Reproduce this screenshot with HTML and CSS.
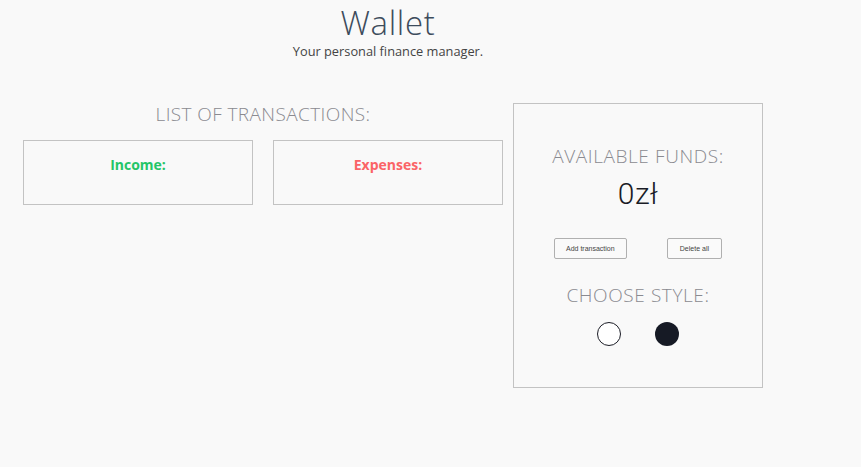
FILE: index.html
```html
<!DOCTYPE html>
<html lang="en">
<head>
<meta charset="utf-8">
<title>Wallet</title>
<link rel="stylesheet" href="styles.css">
</head>
<body>
<div class="page">
  <header class="header">
    <h1 class="title">Wallet</h1>
    <p class="subtitle">Your personal finance manager.</p>
  </header>
  <main class="main">
    <section class="transactions">
      <h2 class="section-title">LIST OF TRANSACTIONS:</h2>
      <div class="lists">
        <div class="list-box"><h3 class="list-title income">Income:</h3></div>
        <div class="list-box"><h3 class="list-title expenses">Expenses:</h3></div>
      </div>
    </section>
    <aside class="panel">
      <h2 class="panel-title">AVAILABLE FUNDS:</h2>
      <div class="funds">0zł</div>
      <div class="buttons">
        <button class="btn">Add transaction</button>
        <button class="btn">Delete all</button>
      </div>
      <h2 class="panel-title style-title">CHOOSE STYLE:</h2>
      <div class="styles">
        <span class="dot light"></span>
        <span class="dot dark"></span>
      </div>
    </aside>
  </main>
</div>
</body>
</html>
```
FILE: styles.css
```css
* { box-sizing: border-box; }
html, body { margin: 0; padding: 0; background: #f9f9f9; }
body { font-family: "Open Sans", "Lato", sans-serif; color: #333; }
.page { width: 776px; }
.header { text-align: center; padding-top: 0; }
.title {
  margin: 0;
  font-size: 33px; font-weight: 300; line-height: 45px;
  color: #3d4c5c; letter-spacing: 0.7px;
}
.subtitle { margin: -3px 0 0; font-size: 12.8px; line-height: 18px; color: #444; }
.main { display: flex; align-items: flex-start; padding-left: 23px; margin-top: 1px; }
.transactions { width: 480px; padding-top: 41px; }
.section-title {
  margin: 0; text-align: center; font-size: 19px; font-weight: 300;
  line-height: 24px; color: #8a8a90; letter-spacing: 0.4px;
}
.lists { display: flex; gap: 20px; margin-top: 14px; }
.list-box { width: 230px; height: 65px; border: 1px solid #c3c3c3; padding-top: 15px; }
.list-title { margin: 0; text-align: center; font-size: 14px; font-weight: 700; line-height: 18px; }
.income { color: #24c568; }
.expenses { color: #fb6467; }
.panel {
  width: 250px; height: 285px; margin-left: 10px; margin-top: 42px;
  border: 1px solid #c3c3c3; display: flex; flex-direction: column; align-items: center;
  padding-top: 40px;
}
.panel-title { margin: 0; font-size: 19px; font-weight: 300; line-height: 24px; color: #8a8a90; letter-spacing: 0.6px; }
.funds { margin-top: 8px; font-family: "Roboto", sans-serif; font-size: 30px; font-weight: 300; line-height: 36px; color: #1a1c26; letter-spacing: 0.5px; }
.buttons { display: flex; justify-content: space-between; width: 168px; margin-top: 26px; }
.btn {
  font-family: "Liberation Sans", Arial, sans-serif; font-size: 7px; color: #444;
  background: #fafafa; border: 1px solid #b0b0b0; border-radius: 2px;
  height: 21px; padding: 0 11px;
}
.btn + .btn { padding: 0 12px; }
.style-title { margin-top: 24px; }
.styles { display: flex; gap: 34px; margin-top: 15px; }
.dot { width: 24px; height: 24px; border-radius: 50%; display: block; }
.light { border: 1.5px solid #1b1d26; background: #fff; }
.dark { background: #161a25; }
```
